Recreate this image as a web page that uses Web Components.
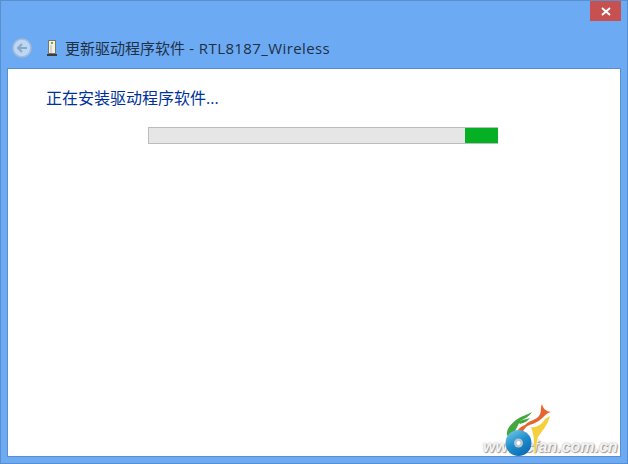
<!DOCTYPE html>
<html lang="zh">
<head>
<meta charset="utf-8">
<title>更新驱动程序软件</title>
<style>
  html, body { margin: 0; padding: 0; }
  body { width: 628px; height: 464px; overflow: hidden; font-family: "Open Sans", "Noto Sans CJK SC", sans-serif; }
  .latin { letter-spacing: 0.4px; }
</style>
</head>
<body>
<wizard-window>
  <span slot="title">更新驱动程序软件<span class="latin"> - RTL8187_Wireless</span></span>
  <install-progress label="正在安装驱动程序软件..."></install-progress>
  <cfan-mark></cfan-mark>
</wizard-window>

<script>
class WizardWindow extends HTMLElement {
  constructor() {
    super();
    this.attachShadow({ mode: 'open' });
    this.shadowRoot.innerHTML = `
      <style>
        :host {
          display: flex;
          flex-direction: column;
          box-sizing: border-box;
          width: 628px;
          height: 464px;
          background: #6cabf4;
          border: 1px solid #5a8fce;
          padding: 0 6px 6px 6px;
        }
        .caption {
          display: flex;
          justify-content: flex-end;
          height: 20px;
        }
        .close {
          width: 31px;
          height: 20px;
          background: #c75050;
          display: flex;
          align-items: center;
          justify-content: center;
        }
        .titlebar {
          display: flex;
          align-items: center;
          height: 47px;
          padding: 6px 0 0 5px;
          box-sizing: border-box;
        }
        .back { width: 20px; height: 20px; flex: none; }
        .device { width: 10px; height: 16px; flex: none; margin-left: 15px; margin-right: 8px; }
        .title {
          font-size: 15px;
          line-height: 20px;
          color: #1f2f44;
          white-space: nowrap;
        }
        .panel {
          flex: 1;
          position: relative;
          background: #fff;
          border: 1px solid #5a8fce;
          min-height: 0;
        }
      </style>
      <div class="caption">
        <div class="close">
          <svg width="10" height="9" viewBox="0 0 10 9"><path d="M1 1 L9 8 M9 1 L1 8" stroke="#fff" stroke-width="2" fill="none"/></svg>
        </div>
      </div>
      <div class="titlebar">
        <svg class="back" viewBox="0 0 20 20">
          <circle cx="10" cy="10" r="9" fill="#bcd6f5" stroke="#a3b9d6" stroke-width="1.6"/>
          <path d="M15 10 H6 M10 6 L6 10 L10 14" fill="none" stroke="#8fa6c4" stroke-width="2"/>
        </svg>
        <svg class="device" viewBox="0 0 10 16">
          <rect x="1.5" y="0.5" width="7" height="13" fill="#f1efe6" stroke="#77776c" stroke-width="1"/>
          <rect x="4" y="2" width="2" height="2" fill="#62b04a"/>
          <rect x="3.5" y="5" width="1" height="8" fill="#b9b8ac"/>
          <rect x="0" y="14" width="10" height="2" fill="#3c3f3c"/>
        </svg>
        <span class="title"><slot name="title"></slot></span>
      </div>
      <div class="panel"><slot></slot></div>
    `;
  }
}

class InstallProgress extends HTMLElement {
  constructor() {
    super();
    this.attachShadow({ mode: 'open' });
  }

  connectedCallback() {
    const label = this.getAttribute('label') || '';
    this.shadowRoot.innerHTML = `
      <style>
        :host { display: block; padding: 19px 38px 0 38px; }
        .label {
          font-size: 16px;
          line-height: 20px;
          color: #003399;
          white-space: nowrap;
        }
        .bar {
          box-sizing: border-box;
          display: flex;
          justify-content: flex-end;
          width: 350px;
          height: 17px;
          margin: 19px 0 0 102px;
          background: #e6e6e6;
          border: 1px solid #bcbcbc;
          border-right: none;
        }
        .fill { width: 33px; background: #06b025; }
      </style>
      <div class="label">${label}</div>
      <div class="bar"><div class="fill"></div></div>
    `;
  }
}

class CfanMark extends HTMLElement {
  constructor() {
    super();
    this.attachShadow({ mode: 'open' });
    this.shadowRoot.innerHTML = `
      <style>
        :host { position: absolute; right: 0; bottom: 0; width: 140px; height: 62px; }
        svg { position: absolute; left: 0; top: 0; }
        .url {
          position: absolute;
          left: 3px;
          top: 43px;
          font: italic bold 16px/20px "Liberation Sans", sans-serif;
          color: #f4f4f4;
          text-shadow: 1px 1px 1px #999, 0 0 2px #aaa;
          white-space: nowrap;
        }
      </style>
      <div class="url">www.cfan.com.cn</div>
      <svg width="140" height="62" viewBox="480 395 140 62">
        <defs>
          <linearGradient id="disc" x1="0" y1="0" x2="0.6" y2="1">
            <stop offset="0" stop-color="#7fd0ea"/>
            <stop offset="0.55" stop-color="#1f8fcc"/>
            <stop offset="1" stop-color="#0f6db5"/>
          </linearGradient>
        </defs>
        <path d="M531 428 C537 429 542 425 545 420 L550 417 C548 426 542 432 538 438 C536 443 537 450 535 457 C534 448 535 438 531 428 Z" fill="#f6cf3f"/>
        <path d="M507 436 C506 430 512 424 516 421 C521 417 527 416 532 413 C529 418 524 420 520 422 C518 426 516 431 513 435 C511 437 508 438 507 436 Z" fill="#43a83f"/>
        <path d="M518 423 C522 420 526 421 530 419 C527 423 523 424 520 425 Z" fill="#43a83f"/>
        <path d="M517 436 C516 431 520 428 525 426 C530 421 536 421 539 417 C542 413 540 409 542 405 C543 409 545 412 551 413 C546 414 544 418 540 421 C535 425 530 425 526 428 C523 432 520 437 517 436 Z" fill="#e5672f"/>
        <circle cx="518.5" cy="444" r="13" fill="url(#disc)"/>
        <circle cx="518.5" cy="444" r="4.5" fill="#b9c6cf"/>
        <circle cx="518.5" cy="444" r="2" fill="#fff"/>
      </svg>
    `;
  }
}

customElements.define('wizard-window', WizardWindow);
customElements.define('install-progress', InstallProgress);
customElements.define('cfan-mark', CfanMark);
</script>
</body>
</html>
